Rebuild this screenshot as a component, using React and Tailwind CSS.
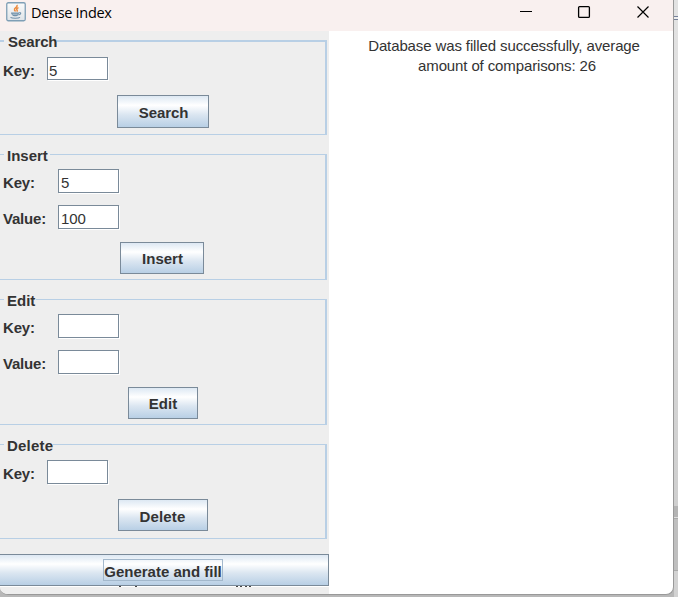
const buttonBase =
  "block shrink-0 border border-[#7a8a99] bg-[linear-gradient(180deg,#dde8f3_0%,#ffffff_30%,#dbe6f1_60%,#b8cfe5_100%)] font-bold text-[#333] text-center whitespace-nowrap";

function Legend({ children, className }) {
  return (
    <h2 className={`ml-1 h-5 w-fit bg-[#eee] leading-5 font-bold whitespace-nowrap ${className}`}>
      {children}
    </h2>
  );
}

function Field({ label, value = "", labelWidth, className = "h-6 pl-[2px] pt-[2px]" }) {
  return (
    <label className="flex">
      <span className={`${labelWidth} shrink-0 pl-[3px] pt-1 font-bold leading-5 tracking-[-0.2px]`}>{label}</span>
      <input
        readOnly
        value={value}
        className={`w-[61px] rounded-none border border-[#7a8a99] bg-white leading-4 tracking-[-0.1px] text-[#333] shadow-[1px_1px_0_#fff] outline-none ${className}`}
      />
    </label>
  );
}

function JavaIcon() {
  return (
    <svg width="20" height="20" viewBox="0 0 20 20" fill="none">
      <defs>
        <linearGradient id="tile" x1="0" y1="0" x2="0" y2="1">
          <stop offset="0" stopColor="#fafafa" />
          <stop offset="1" stopColor="#dfe4e8" />
        </linearGradient>
      </defs>
      <rect x="0.75" y="0.75" width="18.5" height="18" rx="1.5" fill="url(#tile)" stroke="#7f9fb6" strokeWidth="1.3" />
      <path d="M10.8 3c1.600 2.200-3 2.900-2.300 4.900.2.600.8 1 1 1.600M12.500 5.600c-1.900.7-2.300 1.600-1.400 2.500.4.500.1 1-.4 1.400" stroke="#ec8a3d" strokeWidth="1.500" />
      <path d="M5 10.600h8c0 2-1.200 3.700-3 3.700H8.500c-2 0-3.300-1.700-3.500-3.700z" fill="#7191aa" />
      <path d="M6.500 12.200h5" stroke="#c4d2dc" strokeWidth="0.800" />
      <path d="M13 10.800c2.500-.6 2.300 1.600-.5 2.200M4.500 15.400c1.500 1.100 8 1.100 9.500 0" stroke="#7191aa" strokeWidth="1.100" />
    </svg>
  );
}

export default function App() {
  return (
    <div className="flex h-[597px] w-[678px] overflow-hidden bg-[#b8b8b8] font-['Liberation_Sans',Arial,sans-serif] text-[15px] text-[#333]">
      <div className="flex h-[595px] w-[674px] shrink-0 flex-col overflow-hidden rounded-b-[8px] border-r border-b border-[#999] bg-white">
        <header className="flex h-[31px] shrink-0 bg-[#f9f0ef] text-black">
          <div className="ml-[6px] mt-[2px]"><JavaIcon /></div>
          <h1 className="ml-[5px] mt-[3px] font-['Open_Sans','Noto_Sans',sans-serif] text-[14.5px] leading-5 tracking-[-0.3px] whitespace-nowrap">
            Dense Index
          </h1>
          <svg className="ml-auto shrink-0" width="153" height="31" viewBox="520 0 153 31" fill="none" stroke="#000">
            <path d="M520 11.500h12" />
            <rect x="578.600" y="6.600" width="10.800" height="10.800" rx="1" strokeWidth="1.300" />
            <path d="m637.500 6.500 11 11m0-11-11 11" strokeWidth="1.200" />
          </svg>
        </header>
        <main className="flex min-h-0 flex-1">
          <div className="flex w-[329px] shrink-0 flex-col bg-[#eee]">
            <section className="mt-[9px] h-[95px] w-[327px] shrink-0 border-t-2 border-r-2 border-b border-[#b8cfe5]">
              <Legend className="-mt-[10px] w-[56px] pl-1 tracking-[-0.1px]">Search</Legend>
              <div className="pt-[5px]"><Field label="Key:" value="5" labelWidth="w-[47px]" className="h-[23px] pl-px pt-1" /></div>
              <button className={`${buttonBase} ml-[117px] mt-[14px] h-[33px] w-[92px] pt-[3px] pl-px tracking-[-0.1px]`}>Search</button>
            </section>
            <section className="mt-[19px] h-[126px] w-[327px] shrink-0 border-t border-r-2 border-b border-[#b8cfe5]">
              <Legend className="-mt-[9px] pl-[3px] pr-[2px]">Insert</Legend>
              <div className="flex flex-col gap-3 pt-[3px]">
                <Field label="Key:" value="5" labelWidth="w-[58px]" />
                <Field label="Value:" value="100" labelWidth="w-[58px]" />
              </div>
              <button className={`${buttonBase} ml-[120px] mt-[13px] h-8 w-[84px] pt-[3px] pl-px`}>Insert</button>
            </section>
            <section className="mt-[19px] h-[126px] w-[327px] shrink-0 border-t border-r-2 border-b border-[#b8cfe5]">
              <Legend className="-mt-[9px] pl-[3px] pr-px">Edit</Legend>
              <div className="flex flex-col gap-3 pt-[3px]">
                <Field label="Key:" labelWidth="w-[58px]" />
                <Field label="Value:" labelWidth="w-[58px]" />
              </div>
              <button className={`${buttonBase} ml-[128px] mt-[13px] h-8 w-[70px] pt-[3px]`}>Edit</button>
            </section>
            <section className="mt-[19px] h-[95px] w-[327px] shrink-0 border-t border-r-2 border-b border-[#b8cfe5]">
              <Legend className="-mt-[9px] pl-[3px] tracking-[0.2px]">Delete</Legend>
              <div className="pt-1"><Field label="Key:" labelWidth="w-[47px]" /></div>
              <button className={`${buttonBase} ml-[118px] mt-[15px] h-8 w-[90px] pt-[4px] pr-px tracking-[0.2px]`}>Delete</button>
            </section>
            <button className={`${buttonBase} mt-[15px] flex h-8 w-[329px] justify-center border-l-0 pt-1 pr-[3px] shadow-[0_1px_0_#fff]`}>
              <span className="flex h-[22px] w-[120px] items-center justify-center border border-[#a3b8cc] pt-[5px] pl-px">Generate and fill</span>
            </button>
            <svg className="shrink-0" width="329" height="2" fill="#444">
              <path d="M119 0h2v1h-2zM135 0h2v1h-2zM236 0h2v1h-2zM240 0h2v1h-2zM245 0h2v1h-2zM249 0h2v1h-2z" />
            </svg>
          </div>
          <p className="flex-1 pt-[5px] pl-[6px] text-center leading-5 tracking-[-0.12px] whitespace-nowrap">
            Database was filled successfully, average<br />
            <span className="pl-[6px]">amount of comparisons: 26</span>
          </p>
        </main>
      </div>
      <aside className="flex flex-1 flex-col bg-[#d2d2d2]">
        <div className="h-4 bg-[#e2e2e2]" />
        <div className="h-1 border-y border-[#76819a] bg-[#eee]" />
        <div className="h-[486px] bg-[linear-gradient(180deg,#e2e2e2,#cfcfcf)]" />
        <div className="h-[11px] bg-[#b4b4b4]" />
        <div className="h-px bg-[#ddd]" />
        <div className="h-[53px] border-t border-b border-[#aaa] bg-[#bfbfbf]" />
      </aside>
    </div>
  );
}
